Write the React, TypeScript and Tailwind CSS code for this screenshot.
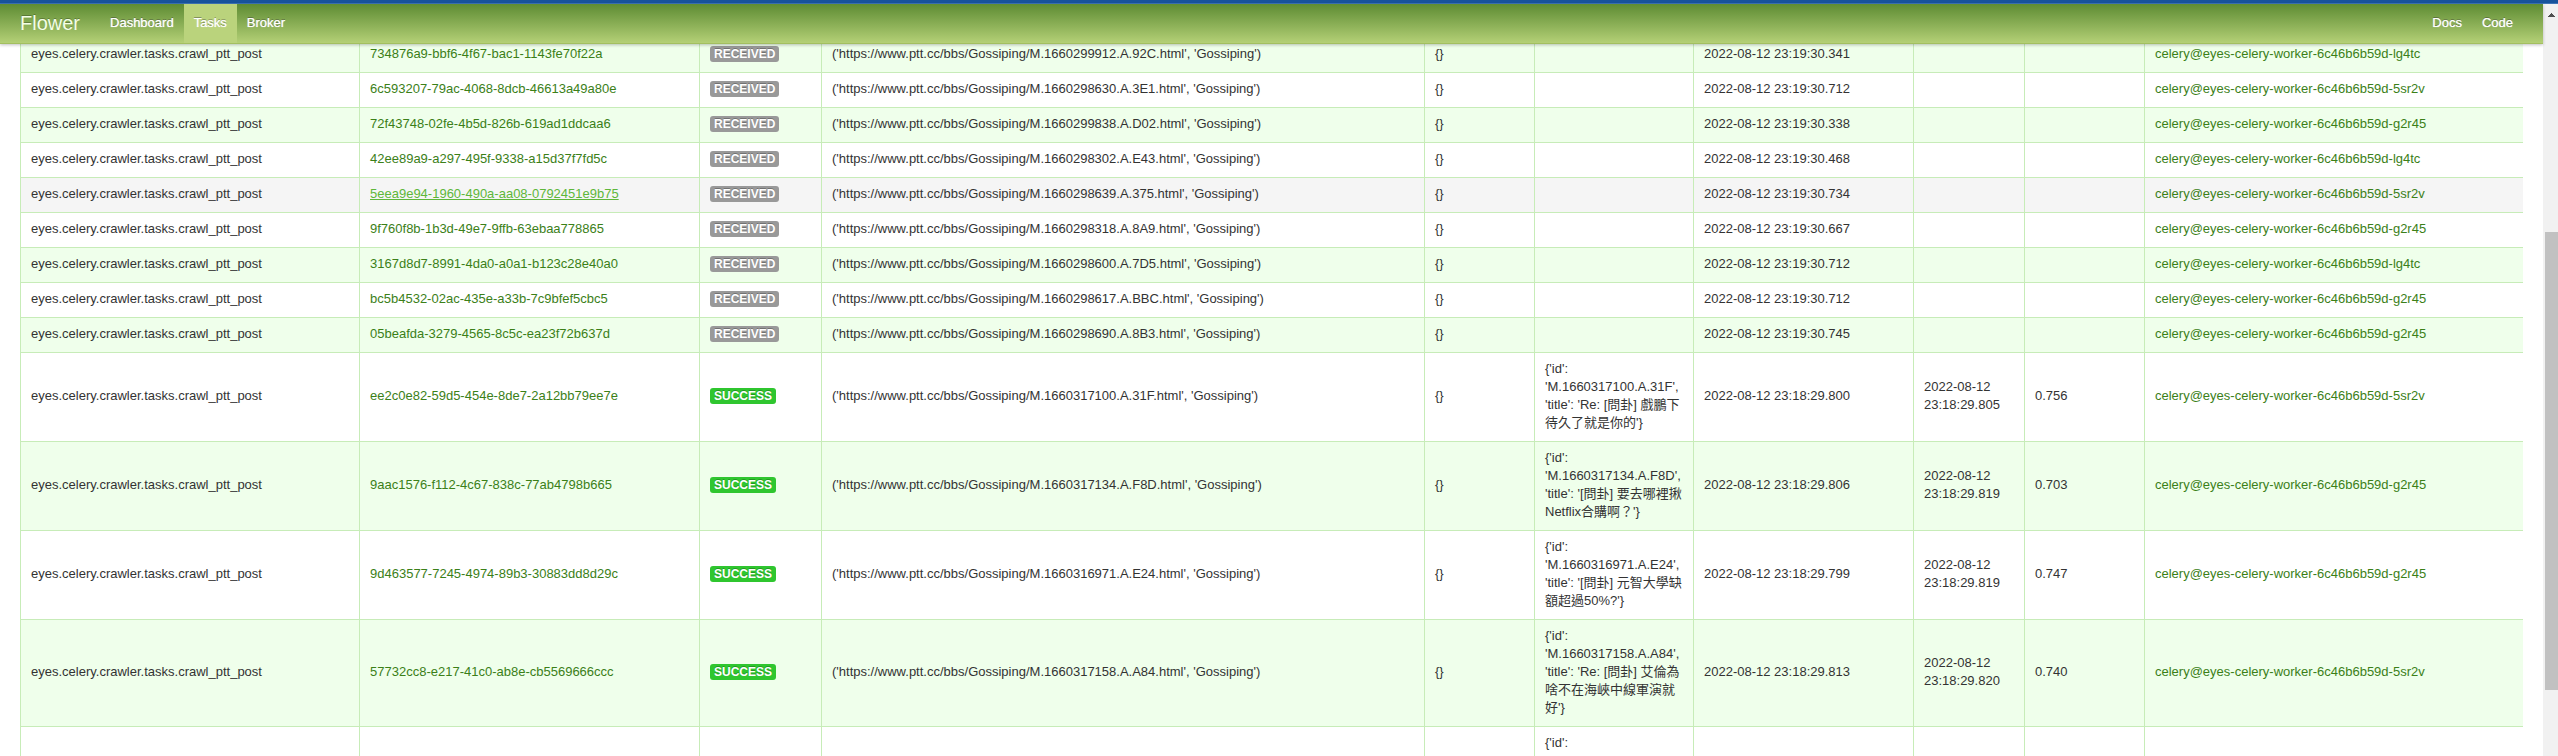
const HOST = 'celery@eyes-celery-worker-6c46b6b59d-';
const TASK = 'eyes.celery.crawler.tasks.crawl_ptt_post';

type Task = {
  id: string;
  state: 'RECEIVED' | 'SUCCESS';
  page: string;
  result?: string;
  received?: string;
  started?: string;
  runtime?: string;
  worker: string;
  hovered?: boolean;
};

const tasks: Task[] = [
  { id: '734876a9-bbf6-4f67-bac1-1143fe70f22a', state: 'RECEIVED', page: 'M.1660299912.A.92C', received: '2022-08-12 23:19:30.341', worker: 'lg4tc' },
  { id: '6c593207-79ac-4068-8dcb-46613a49a80e', state: 'RECEIVED', page: 'M.1660298630.A.3E1', received: '2022-08-12 23:19:30.712', worker: '5sr2v' },
  { id: '72f43748-02fe-4b5d-826b-619ad1ddcaa6', state: 'RECEIVED', page: 'M.1660299838.A.D02', received: '2022-08-12 23:19:30.338', worker: 'g2r45' },
  { id: '42ee89a9-a297-495f-9338-a15d37f7fd5c', state: 'RECEIVED', page: 'M.1660298302.A.E43', received: '2022-08-12 23:19:30.468', worker: 'lg4tc' },
  { id: '5eea9e94-1960-490a-aa08-0792451e9b75', state: 'RECEIVED', page: 'M.1660298639.A.375', received: '2022-08-12 23:19:30.734', worker: '5sr2v', hovered: true },
  { id: '9f760f8b-1b3d-49e7-9ffb-63ebaa778865', state: 'RECEIVED', page: 'M.1660298318.A.8A9', received: '2022-08-12 23:19:30.667', worker: 'g2r45' },
  { id: '3167d8d7-8991-4da0-a0a1-b123c28e40a0', state: 'RECEIVED', page: 'M.1660298600.A.7D5', received: '2022-08-12 23:19:30.712', worker: 'lg4tc' },
  { id: 'bc5b4532-02ac-435e-a33b-7c9bfef5cbc5', state: 'RECEIVED', page: 'M.1660298617.A.BBC', received: '2022-08-12 23:19:30.712', worker: 'g2r45' },
  { id: '05beafda-3279-4565-8c5c-ea23f72b637d', state: 'RECEIVED', page: 'M.1660298690.A.8B3', received: '2022-08-12 23:19:30.745', worker: 'g2r45' },
  { id: 'ee2c0e82-59d5-454e-8de7-2a12bb79ee7e', state: 'SUCCESS', page: 'M.1660317100.A.31F', result: "{'id': 'M.1660317100.A.31F', 'title': 'Re: [問卦] 戲鵬下待久了就是你的'}", received: '2022-08-12 23:18:29.800', started: '2022-08-12 23:18:29.805', runtime: '0.756', worker: '5sr2v' },
  { id: '9aac1576-f112-4c67-838c-77ab4798b665', state: 'SUCCESS', page: 'M.1660317134.A.F8D', result: "{'id': 'M.1660317134.A.F8D', 'title': '[問卦] 要去哪裡揪Netflix合購啊？'}", received: '2022-08-12 23:18:29.806', started: '2022-08-12 23:18:29.819', runtime: '0.703', worker: 'g2r45' },
  { id: '9d463577-7245-4974-89b3-30883dd8d29c', state: 'SUCCESS', page: 'M.1660316971.A.E24', result: "{'id': 'M.1660316971.A.E24', 'title': '[問卦] 元智大學缺額超過50%?'}", received: '2022-08-12 23:18:29.799', started: '2022-08-12 23:18:29.819', runtime: '0.747', worker: 'g2r45' },
  { id: '57732cc8-e217-41c0-ab8e-cb5569666ccc', state: 'SUCCESS', page: 'M.1660317158.A.A84', result: "{'id': 'M.1660317158.A.A84', 'title': 'Re: [問卦] 艾倫為啥不在海峽中線軍演就好'}", received: '2022-08-12 23:18:29.813', started: '2022-08-12 23:18:29.820', runtime: '0.740', worker: '5sr2v' },
];

const CELL = 'border-t border-l border-[#c7ecb8] px-[10px] pt-[7px] pb-[9px] align-middle';
const NAV_LINK = 'flex items-center px-[10px] pb-[2px] text-white [text-shadow:0_0_1px_rgba(255,255,255,0.8),0_-1px_0_rgba(0,0,0,0.35)]';

function StateLabel({ state }: { state: Task['state'] }) {
  const color = state === 'SUCCESS' ? 'bg-[#2fc62f]' : 'bg-[#999999]';
  return (
    <span
      className={`${color} rounded-[3px] px-1 py-px text-[12px] leading-[15px] font-bold text-white [text-shadow:0_-1px_0_rgba(0,0,0,0.25)]`}
    >
      {state}
    </span>
  );
}

function TaskRow({ task, striped }: { task: Task; striped: boolean }) {
  const background = task.hovered ? 'bg-[#f5f5f5]' : striped ? 'bg-[#efffeb]' : 'bg-white';
  const link = task.hovered ? 'text-[#5eb73a] underline' : 'text-[#3b8018]';
  return (
    <tr className={background}>
      <td className={CELL}>{TASK}</td>
      <td className={CELL}>
        <a href={`#${task.id}`} className={link}>{task.id}</a>
      </td>
      <td className={CELL}><StateLabel state={task.state} /></td>
      <td className={CELL}>{`('https://www.ptt.cc/bbs/Gossiping/${task.page}.html', 'Gossiping')`}</td>
      <td className={CELL}>{'{}'}</td>
      <td className={CELL}>{task.result}</td>
      <td className={CELL}>{task.received}</td>
      <td className={CELL}>{task.started}</td>
      <td className={CELL}>{task.runtime}</td>
      <td className={CELL}>
        <a href={`#${task.worker}`} className="text-[#3b8018]">{HOST + task.worker}</a>
      </td>
    </tr>
  );
}

function PartialRow() {
  return (
    <tr className="bg-white">
      <td className={CELL} />
      <td className={CELL} />
      <td className={CELL} />
      <td className={CELL} />
      <td className={CELL} />
      <td className={CELL}>{"{'id':"}</td>
      <td className={CELL} />
      <td className={CELL} />
      <td className={CELL} />
      <td className={CELL} />
    </tr>
  );
}

function Navbar() {
  return (
    <header className="relative z-10 flex h-10 shrink-0 border-b border-[#a3bf60] bg-linear-to-b from-[#5e8c33] to-[#b4d076] px-5 shadow-[0_1px_3px_rgba(0,0,0,0.25)]">
      <a href="#" className="flex items-center pr-5 pb-[2px] text-[20px] leading-5 text-[#f3ffe6] [text-shadow:0_-1px_0_rgba(0,0,0,0.25)]">Flower</a>
      <nav className="flex grow">
        <a href="#dashboard" className={NAV_LINK}>Dashboard</a>
        <a href="#tasks" className={`${NAV_LINK} bg-[#bad37c]`}>Tasks</a>
        <a href="#broker" className={NAV_LINK}>Broker</a>
        <span className="grow" />
        <a href="#docs" className={NAV_LINK}>Docs</a>
        <a href="#code" className={NAV_LINK}>Code</a>
      </nav>
    </header>
  );
}

function Scrollbar() {
  return (
    <div className="flex w-[15px] shrink-0 flex-col items-end bg-[#f1f1f1]" aria-hidden="true">
      <div className="flex h-[17px] w-[13px] items-center justify-center pt-1">
        <svg width="7" height="4" viewBox="0 0 7 4" shapeRendering="crispEdges">
          <path d="M3 0h1v1h1v1h1v1h1v1H0V3h1V2h1V1h1z" fill="#505050" />
        </svg>
      </div>
      <div className="h-[28%] shrink-0" />
      <div className="h-[61%] w-[13px] bg-[#c1c1c1]" />
    </div>
  );
}

export default function App() {
  return (
    <div className="flex h-screen flex-col overflow-hidden bg-white font-['Liberation_Sans','Noto_Sans_CJK_TC',sans-serif] text-[13px] leading-[18px] text-[#333333]">
      <div className="h-1 shrink-0 border-b border-[#3d74b6] bg-[#17539c]" />
      <div className="flex min-h-0 grow">
        <div className="flex min-w-0 grow flex-col">
          <Navbar />
          <main className="min-h-0 grow overflow-hidden px-5">
            {/* The list is scrolled, so its first visible row starts under the navbar. */}
            <table className="-mt-[7px] w-full border-separate border-spacing-0">
              <colgroup>
                <col className="w-[339px]" />
                <col className="w-[340px]" />
                <col className="w-[122px]" />
                <col className="w-[603px]" />
                <col className="w-[110px]" />
                <col className="w-[159px]" />
                <col className="w-[220px]" />
                <col className="w-[111px]" />
                <col className="w-[120px]" />
                <col className="w-[379px]" />
              </colgroup>
              <tbody>
                {tasks.map((task, index) => (
                  <TaskRow key={task.id} task={task} striped={index % 2 === 0} />
                ))}
                <PartialRow />
              </tbody>
            </table>
          </main>
        </div>
        <Scrollbar />
      </div>
    </div>
  );
}
